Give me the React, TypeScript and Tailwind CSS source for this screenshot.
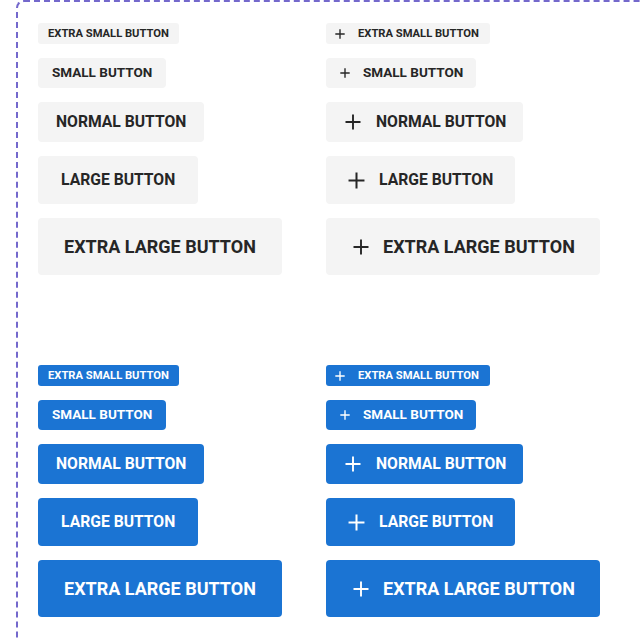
import React from "react";

type Size = "xs" | "sm" | "md" | "lg" | "xl";

const sizes: { key: Size; label: string }[] = [
  { key: "xs", label: "Extra small button" },
  { key: "sm", label: "Small button" },
  { key: "md", label: "Normal button" },
  { key: "lg", label: "Large button" },
  { key: "xl", label: "Extra large button" },
];

const base: Record<Size, string> = {
  xs: "h-[21px] text-[11.2px] rounded-[3px]",
  sm: "h-[30px] text-[13.5px] rounded-[4px]",
  md: "h-[40px] text-[15.7px] rounded-[4px]",
  lg: "h-[48px] text-[15.7px] rounded-[4px]",
  xl: "h-[57px] text-[18px] rounded-[4px]",
};

const plain: Record<Size, string> = {
  xs: "px-[10px]",
  sm: "px-[14px]",
  md: "px-[18px]",
  lg: "px-[23px]",
  xl: "px-[26px]",
};

const withIcon: Record<Size, string> = {
  xs: "pl-[9px] pr-[11px] gap-[13px]",
  sm: "pl-[14px] pr-[13px] gap-[13px]",
  md: "pl-[19px] pr-[17px] gap-[15px]",
  lg: "pl-[22px] pr-[22px] gap-[14px]",
  xl: "pl-[27px] pr-[25px] gap-[14px]",
};

const iconSize: Record<Size, string> = {
  xs: "w-[10px] h-[10px]",
  sm: "w-[10px] h-[10px]",
  md: "w-[16px] h-[16px]",
  lg: "w-[17px] h-[17px]",
  xl: "w-[16px] h-[16px]",
};

function Plus({ size }: { size: Size }) {
  return (
    <svg viewBox="0 0 16 16" className={iconSize[size] + " shrink-0"} fill="none" stroke="currentColor" strokeWidth={size === "xs" || size === "sm" ? 2.2 : 1.9}>
      <path d="M8 0.5v15M0.5 8h15" />
    </svg>
  );
}

function Button({ size, label, icon, primary }: { size: Size; label: string; icon?: boolean; primary?: boolean }) {
  return (
    <button
      className={
        "inline-flex items-center justify-center font-bold uppercase leading-none " +
        base[size] +
        " " +
        (icon ? withIcon[size] : plain[size]) +
        " " +
        (primary ? "bg-[#1b74d3] text-white" : "bg-[#f4f4f4] text-[#262626]")
      }
    >
      {icon && <Plus size={size} />}
      <span>{label}</span>
    </button>
  );
}

function Column({ icon, primary }: { icon?: boolean; primary?: boolean }) {
  return (
    <div className="flex w-[288px] flex-col items-start gap-[14px]">
      {sizes.map((s) => (
        <Button key={s.key} size={s.key} label={s.label} icon={icon} primary={primary} />
      ))}
    </div>
  );
}

export default function App() {
  return (
    <div className="h-[640px] w-[640px] overflow-hidden bg-white font-['Roboto',sans-serif]">
      <div className="ml-[16px] h-[700px] w-[700px] rounded-tl-[8px] border-2 border-dashed border-[#7468cc] pl-[20px] pt-[21px]">
        <div className="flex flex-col gap-[90px]">
          <div className="flex">
            <Column />
            <Column icon />
          </div>
          <div className="flex">
            <Column primary />
            <Column icon primary />
          </div>
        </div>
      </div>
    </div>
  );
}
